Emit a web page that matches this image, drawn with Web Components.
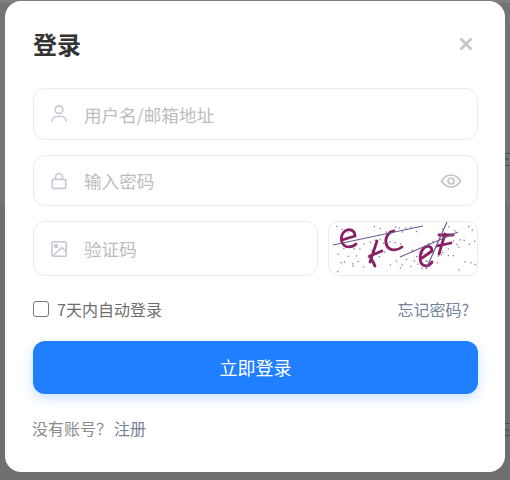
<!DOCTYPE html>
<html lang="zh">
<head>
<meta charset="utf-8">
<title>登录</title>
<style>
  html, body { margin: 0; height: 100%; }
  body {
    background:
      linear-gradient(#4a4f58, #4a4f58) 505px 153px / 5px 1px no-repeat,
      linear-gradient(#555a63, #555a63) 505px 158px / 4px 2px no-repeat,
      linear-gradient(#4a4f58, #4a4f58) 505px 165px / 5px 1px no-repeat,
      linear-gradient(#4a4f58, #4a4f58) 505px 423px / 5px 1px no-repeat,
      linear-gradient(#555a63, #555a63) 505px 429px / 4px 2px no-repeat,
      linear-gradient(#4a4f58, #4a4f58) 505px 435px / 5px 1px no-repeat,
      linear-gradient(#808080 0 3px, #747474 3px 205px, #6f6f6f 205px);
    font-family: "Noto Sans CJK SC", "Liberation Sans", sans-serif;
    overflow: hidden;
  }
</style>
</head>
<body>
<login-dialog>
  <span slot="title">登录</span>
  <field-row placeholder="用户名/邮箱地址" icon="user"></field-row>
  <field-row placeholder="输入密码" icon="lock" eye short></field-row>
  <div style="display:grid;grid-template-columns:285px 150px;gap:10px">
    <field-row placeholder="验证码" icon="image" tall></field-row>
    <captcha-box></captcha-box>
  </div>
  <remember-row></remember-row>
  <login-button>立即登录</login-button>
  <signup-line></signup-line>
</login-dialog>

<script>
const ICONS = {
  user: `<circle cx="10" cy="5.7" r="3.8"/><path d="M3 17.6V17a4.500 4.500 0 0 1 4.500-4.500h5A4.500 4.500 0 0 1 17 17v.6"/>`,
  lock: `<rect x="3.200" y="8.400" width="13.600" height="9" rx="2"/><path d="M6.500 8.400V6a3.500 3.500 0 0 1 7 0v2.400"/>`,
  image: `<rect x="2.800" y="2.800" width="14.400" height="14.400" rx="1.500"/><circle cx="7" cy="7" r="1.400"/><path d="M3.500 17L13 8.500l4 4"/>`
};

class LoginDialog extends HTMLElement {
  constructor() {
    super();
    this.attachShadow({ mode: "open" });
    this.shadowRoot.innerHTML = `
      <style>
        :host {
          display: block;
          box-sizing: border-box;
          width: 500px;
          height: 471px;
          margin: 1px 0 0 5px;
          padding: 0 27px 0 28px;
          background: #fff;
          border-radius: 16px;
        }
        header {
          display: flex;
          justify-content: space-between;
          align-items: center;
          box-sizing: border-box;
          height: 87px;
          padding-bottom: 2px;
          color: #333;
          font-size: 24px;
          font-weight: 700;
        }
        svg { display: block; margin-right: 5px; }
        main { display: flex; flex-direction: column; }
      </style>
      <header>
        <slot name="title"></slot>
        <svg width="14" height="14" viewBox="0 0 14 14" fill="none" stroke="#c8c8c8" stroke-width="3"><path d="M1.500 1.500l11 11M12.500 1.500l-11 11"/></svg>
      </header>
      <main><slot></slot></main>`;
  }
}

class FieldRow extends HTMLElement {
  constructor() {
    super();
    this.attachShadow({ mode: "open" });
  }
  connectedCallback() {
    const icon = ICONS[this.getAttribute("icon")];
    const eye = this.hasAttribute("eye") ? `
      <svg class="eye" width="22" height="22" viewBox="0 0 22 22" fill="none" stroke="#c4c4c4" stroke-width="1.700">
        <path d="M1.500 11C4 6.900 7.200 5 11 5s7 1.900 9.500 6C18 15.100 14.800 17 11 17s-7-1.900-9.500-6z"/><circle cx="11" cy="11" r="3"/>
      </svg>` : "";
    this.shadowRoot.innerHTML = `
      <style>
        :host {
          display: flex;
          box-sizing: border-box;
          align-items: center;
          height: 52px;
          margin-bottom: 15px;
          padding: 0 15px;
          border: 1px solid #ececef;
          border-radius: 12px;
          background: #fff;
          color: #bdbdbd;
          font-size: 17.6px;
        }
        :host([short]) { height: 51px; }
        :host([tall]) { height: 55px; margin-bottom: 0; }
        .ico { flex: none; margin-right: 15px; }
        span { flex: 1; }
      </style>
      <svg class="ico" width="20" height="20" viewBox="0 0 20 20" fill="none" stroke="#c3c8d4" stroke-width="1.600">${icon}</svg>
      <span>${this.getAttribute("placeholder")}</span>${eye}`;
  }
}

class CaptchaBox extends HTMLElement {
  constructor() {
    super();
    this.attachShadow({ mode: "open" });
    let dots = "";
    for (let i = 1; i <= 85; i++) {
      const x = 3 + (i * 61.803 + 9 * Math.sin(i * 2.1)) % 143;
      const y = 3 + (i * 37.7 + 6 * Math.cos(i * 1.3)) % 47;
      dots += `<rect x="${x.toFixed(1)}" y="${y.toFixed(1)}" width="1.300" height="1.300" fill="#6a5a8c" opacity=".8"/>`;
    }
    this.shadowRoot.innerHTML = `
      <style>
        :host {
          display: block;
          box-sizing: border-box;
          height: 55px;
          border: 1px solid #ececef;
          border-radius: 10px;
          overflow: hidden;
        }
        svg { display: block; }
      </style>
      <svg width="148" height="53" viewBox="0 0 148 53" fill="none">
        ${dots}
        <g stroke="#8a1f63" stroke-width="2.800" stroke-linecap="round">
          <path d="M13 18 L26 14 C26 8 20 6 16 9 C11 13 11 22 17 24.500 C21 25.500 25 24 27 22"/>
          <path d="M48 19 L41 40 M53 29 L41 34 L46 44"/>
          <path d="M65 9 C58 10 55 18 58 24 C61 29 68 29 73 25"/>
          <path d="M93 36 L103 29 C103 24 98 23 95 26 C90 31 90 40 94 43 C98 45 101 43 103 40"/>
          <path d="M116 12 L110 32 M110 13 L124 13 M108 24 L122 21"/>
        </g>
        <g stroke="#6d5b92" stroke-width="1.200">
          <path d="M4 23 L94 4"/>
          <path d="M71 35 L129 10"/>
          <path d="M97 47 L118 0"/>
        </g>
      </svg>`;
  }
}

class RememberRow extends HTMLElement {
  constructor() {
    super();
    this.attachShadow({ mode: "open" });
    this.shadowRoot.innerHTML = `
      <style>
        :host {
          display: flex;
          align-items: center;
          justify-content: space-between;
          height: 65px;
          font-size: 16px;
        }
        label { display: flex; align-items: center; gap: 8px; color: #6e6e6e; }
        i {
          box-sizing: border-box;
          width: 16px;
          height: 16px;
          border: 1.500px solid #767676;
          border-radius: 3px;
        }
        a { color: #74829b; margin-right: 9px; }
      </style>
      <label><i></i>7天内自动登录</label>
      <a>忘记密码?</a>`;
  }
}

class LoginButton extends HTMLElement {
  constructor() {
    super();
    this.attachShadow({ mode: "open" });
    this.shadowRoot.innerHTML = `
      <style>
        :host {
          display: flex;
          align-items: center;
          justify-content: center;
          box-sizing: border-box;
          height: 53px;
          padding-bottom: 2px;
          background: #207fff;
          border-radius: 12px;
          box-shadow: 0 4px 12px rgba(32, 127, 255, .25);
          color: #fff;
          font-size: 18px;
        }
      </style>
      <slot></slot>`;
  }
}

class SignupLine extends HTMLElement {
  constructor() {
    super();
    this.attachShadow({ mode: "open" });
    this.shadowRoot.innerHTML = `
      <style>
        :host {
          display: block;
          margin: 22px 0 0 -1px;
          font-size: 16px;
          color: #8c8c8c;
        }
        a { color: #74829b; margin-left: 2px; }
      </style>
      没有账号？<a>注册</a>`;
  }
}

customElements.define("login-dialog", LoginDialog);
customElements.define("field-row", FieldRow);
customElements.define("captcha-box", CaptchaBox);
customElements.define("remember-row", RememberRow);
customElements.define("login-button", LoginButton);
customElements.define("signup-line", SignupLine);
</script>
</body>
</html>
